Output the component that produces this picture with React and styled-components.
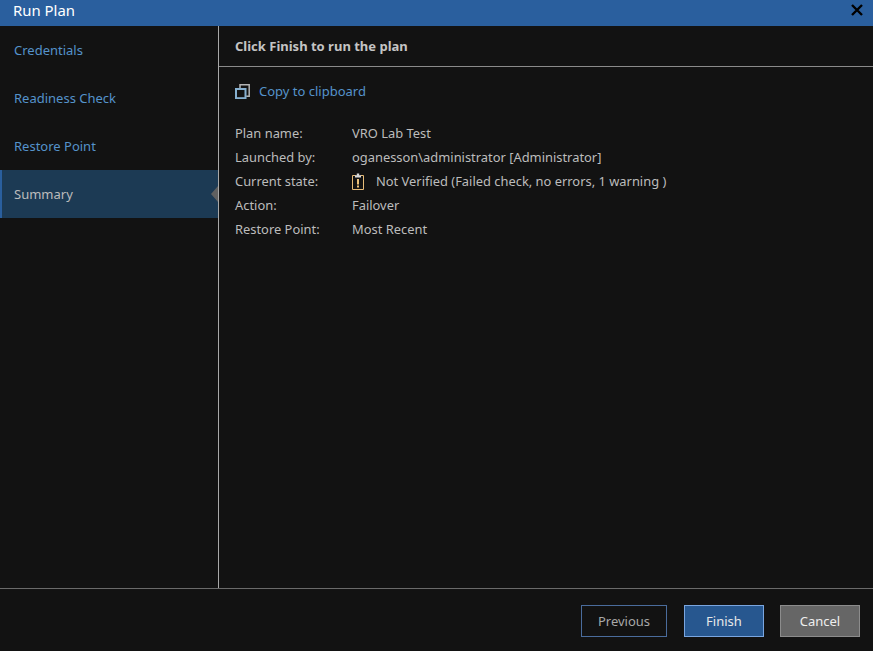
import React from 'react';
import styled, { createGlobalStyle } from 'styled-components';

const GlobalStyle = createGlobalStyle`
  html, body {
    margin: 0;
    padding: 0;
    height: 100%;
    background: #121212;
  }
  #root {
    height: 100%;
  }
`;

const Dialog = styled.div`
  display: flex;
  flex-direction: column;
  width: 873px;
  height: 651px;
  overflow: hidden;
  background: #121212;
  color: #bcbcbc;
  font-family: "Noto Sans", "Open Sans", sans-serif;
  font-size: 13px;
`;

const TitleBar = styled.div`
  display: flex;
  align-items: center;
  justify-content: space-between;
  flex: 0 0 26px;
  padding: 0 10px 6px 13px;
  box-sizing: border-box;
  background: #2a5f9e;
  color: #fff;
  font-size: 14.9px;
`;

const CloseButton = styled.button`
  display: flex;
  padding: 0;
  border: 0;
  background: none;
  cursor: pointer;
`;

const Body = styled.div`
  display: flex;
  flex: 1;
  min-height: 0;
`;

const Sidebar = styled.nav`
  flex: 0 0 218px;
  border-right: 1px solid #a8a8a8;
`;

const NavItem = styled.div`
  position: relative;
  display: flex;
  align-items: center;
  height: 48px;
  padding-left: ${(p) => (p.$active ? '12px' : '14px')};
  border-left: ${(p) => (p.$active ? '2px solid #2a5f9e' : '0')};
  background: ${(p) => (p.$active ? '#1c3a54' : 'transparent')};
  color: ${(p) => (p.$active ? '#bcbcbc' : '#5593cb')};
`;

const Pointer = styled.span`
  position: absolute;
  right: 0;
  top: 16px;
  width: 0;
  height: 0;
  border-top: 8px solid transparent;
  border-bottom: 8px solid transparent;
  border-right: 7px solid #606060;
`;

const Main = styled.main`
  flex: 1;
  min-width: 0;
`;

const Heading = styled.h2`
  display: flex;
  align-items: center;
  height: 41px;
  margin: 0;
  padding: 0 16px 1px;
  box-sizing: border-box;
  border-bottom: 1px solid #8a8a8a;
  color: #c4c4c4;
  font-size: 13px;
  font-weight: 700;
`;

const Content = styled.div`
  padding: 11px 16px;
`;

const CopyLink = styled.a`
  display: flex;
  align-items: center;
  gap: 9px;
  height: 26px;
  margin-bottom: 17px;
  color: #5593cb;
`;

const Details = styled.div`
  display: grid;
  grid-template-columns: 117px 1fr;
  grid-auto-rows: 24px;
  align-items: center;
  font-size: 12.9px;
`;

const Status = styled.span`
  display: flex;
  align-items: center;
  gap: 12px;
`;

const Footer = styled.footer`
  display: flex;
  justify-content: flex-end;
  gap: 16px;
  flex: 0 0 63px;
  padding: 16px 13px 0 0;
  box-sizing: border-box;
  border-top: 1px solid #6a6a6a;
`;

const variants = {
  ghost: 'margin-right: 1px; border-color: #4a6c9c; background: transparent; color: #a8a8a8;',
  primary: 'border-color: #7aa6e0; background: #27578f; color: #e8e8e8;',
  muted: 'border-color: #8c8c8c; background: #666; color: #eee;',
};

const Button = styled.button`
  width: ${(p) => (p.$variant === 'ghost' ? '86px' : '80px')};
  height: 32px;
  padding: 0;
  border: 1px solid;
  font-family: inherit;
  font-size: 13px;
  cursor: pointer;
  ${(p) => variants[p.$variant]}
`;

const CopyIcon = () => (
  <svg width="15" height="15" viewBox="0 0 15 15" fill="none">
    <path d="M5 4V.8h9.2v11.4h-3" stroke="#b4b4b4" strokeWidth="1.5" />
    <rect x="1" y="5" width="9.5" height="9.2" stroke="#86b0d0" strokeWidth="2" />
  </svg>
);

const WarningIcon = () => (
  <svg width="12" height="17" viewBox="0 0 12 17" fill="none">
    <path d="M3.5 2.5H.5v14h11v-14h-3" stroke="#e6bb78" />
    <path d="M3 4.5V2.2h1.8V.5h2.4v1.7H9v2.3z" fill="#d8d8d8" />
    <path d="M5 6h2v5.5H5zM5 12.5h2v2H5z" fill="#eec27a" />
  </svg>
);

const CloseIcon = () => (
  <svg width="12" height="12" viewBox="0 0 12 12">
    <path d="M1 1l10 10M11 1L1 11" stroke="#000" strokeWidth="2.4" />
  </svg>
);

const steps = ['Credentials', 'Readiness Check', 'Restore Point', 'Summary'];

const App = () => (
  <>
    <GlobalStyle />
    <Dialog>
      <TitleBar>
        Run Plan
        <CloseButton aria-label="Close">
          <CloseIcon />
        </CloseButton>
      </TitleBar>
      <Body>
        <Sidebar>
          {steps.map((step) => (
            <NavItem key={step} $active={step === 'Summary'}>
              {step}
              {step === 'Summary' && <Pointer />}
            </NavItem>
          ))}
        </Sidebar>
        <Main>
          <Heading>Click Finish to run the plan</Heading>
          <Content>
            <CopyLink>
              <CopyIcon />
              Copy to clipboard
            </CopyLink>
            <Details>
              <span>Plan name:</span>
              <span>VRO Lab Test</span>
              <span>Launched by:</span>
              <span>oganesson\administrator [Administrator]</span>
              <span>Current state:</span>
              <Status>
                <WarningIcon />
                Not Verified (Failed check, no errors, 1 warning )
              </Status>
              <span>Action:</span>
              <span>Failover</span>
              <span>Restore Point:</span>
              <span>Most Recent</span>
            </Details>
          </Content>
        </Main>
      </Body>
      <Footer>
        <Button $variant="ghost">Previous</Button>
        <Button $variant="primary">Finish</Button>
        <Button $variant="muted">Cancel</Button>
      </Footer>
    </Dialog>
  </>
);

export default App;
